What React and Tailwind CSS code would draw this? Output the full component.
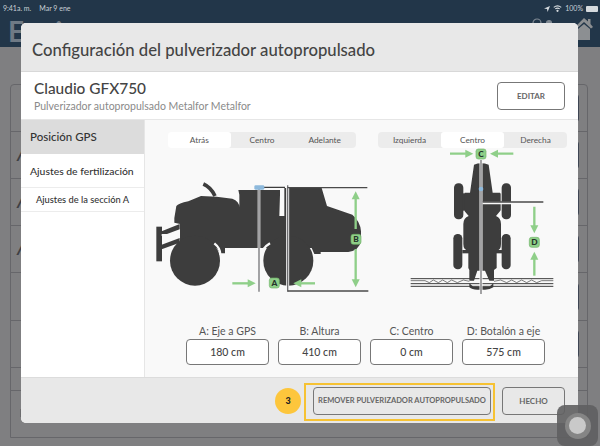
const lato = { fontFamily: 'Lato, "Open Sans", sans-serif' };

const bgRows = [47, 47, 47, 47, 48, 47, 23];

function Segments({ items, active, className }) {
  return (
    <div className={`flex h-4 rounded-[4px] bg-[#ececec] text-[8.3px] leading-4 text-[#555] ${className}`}>
      {items.map((item, i) => (
        <div key={item} className={`flex-1 text-center rounded-[3px] ${i === active ? 'bg-white' : ''}`}>{item}</div>
      ))}
    </div>
  );
}

function Arrow({ x1, y1, x2, y2 }) {
  // green arrow with the head at x2,y2
  const dx = Math.sign(x2 - x1);
  const dy = Math.sign(y2 - y1);
  const head = dx
    ? `${x2},${y2} ${x2 - dx * 24},${y2 - 12} ${x2 - dx * 24},${y2 + 12}`
    : `${x2},${y2} ${x2 - 12},${y2 - dy * 24} ${x2 + 12},${y2 - dy * 24}`;
  return (
    <g>
      <line x1={x1} y1={y1} x2={x2 - dx * 20} y2={y2 - dy * 20} stroke="#8fcf89" strokeWidth="7" />
      <polygon points={head} fill="#8fcf89" />
    </g>
  );
}

function Tag({ x, y, label }) {
  return (
    <g>
      <rect x={x - 15} y={y - 15} width="30" height="30" rx="7" fill="#8fcf89" stroke="#6fb368" strokeWidth="2" />
      <text x={x} y={y + 9} textAnchor="middle" fontSize="25" fontWeight="900" fill="#26332a" style={lato}>{label}</text>
    </g>
  );
}

function SideView() {
  return (
    <svg width="225" height="150" viewBox="0 72 675 450" className="shrink-0">
      <g fill="#3d3d3d">
        <rect x="34" y="308" width="17" height="104" />
        <polygon points="50,322 104,300 104,316 50,336" />
        <polygon points="50,362 104,342 104,356 50,376" />
        <path d="M88 282 L94 246 Q100 238 130 232 L168 216 L215 218 L262 224 Q283 232 283 250 L283 212 L280 198 L405 198 L405 212 L403 276 L418 276 L418 192 L530 192 L546 246 L622 272 Q646 292 648 322 L648 352 Q642 380 610 384 L527 384 L527 390 L508 390 L500 372 L240 372 L240 388 L225 388 L215 372 L105 372 L105 300 L88 296 Z" />
        <circle cx="150" cy="410" r="75" />
        <circle cx="430" cy="410" r="75" />
      </g>
      <path d="M175 180 Q198 190 210 216" fill="none" stroke="#3d3d3d" strokeWidth="11" />
      <path d="M208 358 Q226 372 226 392" fill="none" stroke="#f9f9f9" strokeWidth="7" />
      <path d="M375 358 Q352 372 350 392" fill="none" stroke="#f9f9f9" strokeWidth="7" />
      <rect x="50" y="330" width="52" height="6" fill="#f9f9f9" />
      <line x1="342" y1="190" x2="342" y2="503" stroke="#f9f9f9" strokeWidth="8" />
      <line x1="342" y1="190" x2="342" y2="503" stroke="#77777a" strokeWidth="4" />
      <line x1="342" y1="190" x2="420" y2="190" stroke="#3d3d3d" strokeWidth="4" />
      <line x1="428" y1="184" x2="428" y2="503" stroke="#f9f9f9" strokeWidth="9" />
      <line x1="428" y1="184" x2="428" y2="503" stroke="#6f6f72" strokeWidth="4" />
      <line x1="428" y1="191" x2="667" y2="191" stroke="#4a4a4a" strokeWidth="4" />
      <line x1="428" y1="501" x2="670" y2="501" stroke="#4a4a4a" strokeWidth="4" />
      <rect x="328" y="184" width="30" height="13" rx="4" fill="#8db9dc" />
      <Arrow x1={262} y1={478} x2={332} y2={478} />
      <Arrow x1={510} y1={478} x2={445} y2={478} />
      <Arrow x1={632} y1={315} x2={632} y2={202} />
      <Arrow x1={632} y1={375} x2={632} y2={490} />
      <Tag x={388} y={477} label="A" />
      <Tag x={633} y={346} label="B" />
    </svg>
  );
}

function TopView() {
  return (
    <svg width="210" height="150" viewBox="0 72 630 450" className="shrink-0">
      <g fill="#3d3d3d">
        <rect x="252" y="178" width="28" height="108" rx="13" />
        <rect x="395" y="178" width="28" height="108" rx="13" />
        <rect x="250" y="330" width="27" height="106" rx="13" />
        <rect x="395" y="330" width="27" height="106" rx="13" />
        <rect x="278" y="208" width="20" height="52" />
        <rect x="372" y="208" width="20" height="52" />
        <rect x="277" y="378" width="20" height="10" />
        <rect x="378" y="378" width="20" height="10" />
        <path d="M312 122 Q333 114 356 122 L368 206 L390 206 L390 262 L378 276 Q393 282 393 300 L393 360 Q393 378 380 380 L380 432 L372 438 L372 470 L358 470 L345 440 L322 440 L312 470 L298 470 L298 438 L295 432 L295 380 Q280 378 280 360 L280 300 Q280 282 296 276 L284 262 L284 206 L300 206 Z" />
        <path d="M310 488 L358 488 L370 478 L370 490 Q360 497 345 497 L322 497 Q306 497 298 490 L298 478 Z" />
      </g>
      <g stroke="#3d3d3d" fill="none">
        <line x1="122" y1="464" x2="550" y2="464" strokeWidth="3" />
        <line x1="122" y1="479" x2="550" y2="479" strokeWidth="3" />
        <line x1="122" y1="487" x2="550" y2="487" strokeWidth="3" />
        <path d="M122 470 L165 470 L178 476 L190 468 L205 476 L218 468 L232 476 L245 468 L262 476 L280 468 L298 472 M372 472 L392 468 L410 476 L425 468 L440 476 L455 468 L470 476 L485 468 L500 476 L515 470 L550 470" strokeWidth="2" />
      </g>
      <line x1="333" y1="108" x2="333" y2="510" stroke="#f9f9f9" strokeWidth="9" />
      <line x1="333" y1="108" x2="333" y2="510" stroke="#77777a" strokeWidth="4" />
      <line x1="338" y1="237" x2="520" y2="237" stroke="#f9f9f9" strokeWidth="8" />
      <line x1="338" y1="234" x2="520" y2="234" stroke="#4a4a4a" strokeWidth="4" />
      <circle cx="333" cy="195" r="7" fill="#8db9dc" />
      <Arrow x1={240} y1={89} x2={310} y2={89} />
      <Arrow x1={430} y1={89} x2={360} y2={89} />
      <Arrow x1={493} y1={248} x2={493} y2={328} />
      <Arrow x1={493} y1={455} x2={493} y2={383} />
      <Tag x={333} y={90} label="C" />
      <Tag x={493} y={355} label="D" />
    </svg>
  );
}

function Measure({ label, value }) {
  return (
    <div className="w-[83px] flex flex-col items-center">
      <div className="text-[10.5px] leading-4 h-4 text-[#555] whitespace-nowrap">{label}</div>
      <div className="w-full h-[26px] bg-white border border-[#777] rounded-[4px] text-[10.5px] leading-6 text-center text-[#444] font-medium">{value}</div>
    </div>
  );
}

export default function App() {
  return (
    <div style={lato} className="relative w-[600px] h-[446px] overflow-hidden bg-[#7f7f81]">
      {/* dimmed page behind the dialog */}
      <div className="h-[47px] bg-[#223649] relative">
        <div className="flex items-center h-[17px] pl-[3px] pr-[2px] text-[7px] text-[#c9d0d6] gap-2">
          <span>9:41a. m.</span>
          <span>Mar 9 ene</span>
          <div className="ml-auto flex items-center gap-[3px]">
            <svg width="6" height="6" viewBox="0 0 10 10"><polygon points="10,0 0,4 5,5 6,10" fill="#d5dade" /></svg>
            <svg width="9" height="7" viewBox="0 0 12 9" fill="none" stroke="#d5dade" strokeWidth="1.4"><path d="M1 3 Q6 -1 11 3 M3 5 Q6 3 9 5" /><circle cx="6" cy="7.5" r="0.8" fill="#d5dade" /></svg>
            <span>100%</span>
            <div className="w-[12px] h-[6px] bg-[#d5dade] rounded-[1px]" />
          </div>
        </div>
        <div className="pl-2 text-[28px] leading-[30px] text-[#6f7a85] font-bold -mt-[1px]">Equipo</div>
        <svg width="18" height="22" viewBox="0 0 18 22" className="absolute left-[575px] top-[18px]">
          <polygon points="9,0 13,3.5 13,1 15.5,1 15.5,6 18,9 16,10.5 9,4 2,10.5 0,9" fill="#8c8f92" />
          <polygon points="3,11 9,6 15,11 15,22 3,22" fill="#8c8f92" />
        </svg>
        <svg width="24" height="8" viewBox="0 0 24 8" className="absolute left-[532px] top-[17px]" fill="none" stroke="#7f8993" strokeWidth="1.2">
          <circle cx="5" cy="6" r="4" />
          <circle cx="17" cy="6" r="2.5" fill="#7f8993" />
        </svg>
      </div>
      <div className="ml-[10px] w-[578px] mt-[37px] border border-[#66666a] rounded-t-[4px]">
        {bgRows.map((h, i) => (
          <div key={i} style={{ height: h }} className="border-b border-[#66666a] pl-[6px] pr-[8px] text-[#3f3f44] text-[17px] font-bold flex items-center">
            {i > 0 && i < 4 ? <span className="italic">ʎ</span> : null}
            {i < 6 ? <div className="ml-auto w-[30px] h-[28px] border border-[#3f4654] rounded-[3px]" /> : null}
          </div>
        ))}
        <div className="h-[46px] pl-[9px] pt-[13px] flex gap-[2px] text-[13px] leading-[16px] text-[#6c6c6e] whitespace-nowrap">
          <div className="w-[9px] h-[8px] mt-[5px] bg-[#6c6c6e]" />
          <div className="w-[9px] h-[8px] mt-[5px] mr-[17px] bg-[#6c6c6e]" />
          <span>John Deere, 16 Row Planter #1</span>
        </div>
      </div>

      {/* dialog */}
      <div className="absolute left-[21px] top-[23px] w-[557px] h-[400px] rounded-[5px] overflow-hidden bg-white flex flex-col">
        <div className="h-[49px] shrink-0 bg-[#e8e8e8] border-b border-[#d8d8d8] pl-[11px] pt-[16px] text-[16.7px] leading-[22px] font-medium text-[#444] whitespace-nowrap">
          Configuración del pulverizador autopropulsado
        </div>
        <div className="h-[48px] shrink-0 flex items-center border-b border-[#e6e6e6] pl-[13px] pr-[13px]">
          <div>
            <div className="text-[15.4px] leading-[20px] font-medium text-[#444]">Claudio GFX750</div>
            <div className="text-[10.5px] leading-[14px] text-[#8a8a8a] mt-[1px]">Pulverizador autopropulsado Metalfor Metalfor</div>
          </div>
          <div className="ml-auto w-[68px] h-[28px] border border-[#777] rounded-[4px] text-center text-[8px] leading-[26px] font-bold text-[#666]">EDITAR</div>
        </div>
        <div className="flex-1 flex min-h-0">
          <div className="w-[124px] shrink-0 border-r border-[#e6e6e6] text-[#333]">
            <div className="h-[34px] bg-[#dcdcdc] pl-[9px] text-[11.5px] leading-[34px] font-medium">Posición GPS</div>
            <div className="h-[34px] border-b border-[#ececec] pl-[9px] text-[10.4px] leading-[34px] font-medium">Ajustes de fertilización</div>
            <div className="h-[24px] border-b border-[#ececec] pl-[15px] text-[9.3px] leading-[24px] font-medium">Ajustes de la sección A</div>
          </div>
          <div className="flex-1 bg-[#f9f9f9] min-w-0">
            <div className="flex pt-3">
              <div className="w-[225px] shrink-0">
                <Segments items={['Atrás', 'Centro', 'Adelante']} active={0} className="ml-[23px] w-[188px]" />
                <SideView />
              </div>
              <div className="w-[208px] shrink-0">
                <Segments items={['Izquierda', 'Centro', 'Derecha']} active={1} className="ml-[8px] w-[189px]" />
                <TopView />
              </div>
            </div>
            <div className="flex gap-[9px] pl-[41px] mt-[25px]">
              <Measure label="A: Eje a GPS" value="180 cm" />
              <Measure label="B: Altura" value="410 cm" />
              <Measure label="C: Centro" value="0 cm" />
              <Measure label="D: Botalón a eje" value="575 cm" />
            </div>
          </div>
        </div>
        <div className="h-[46px] shrink-0 bg-[#e8e8e8] border-t border-[#dcdcdc] flex items-start pt-[5px] pr-[13px]">
          <div className="ml-auto mt-[5px] w-[26px] h-[26px] rounded-full bg-[#fdc63c] text-center text-[9px] leading-[26px] font-black text-[#222]">3</div>
          <div className="ml-[3px] w-[191px] h-[38px] border-2 border-[#f6c233] pl-[7px] pt-[2px]">
            <div className="w-[178px] h-[28px] border border-[#777] rounded-[4px] text-center text-[7.5px] leading-[26px] font-bold text-[#666] whitespace-nowrap">REMOVER PULVERIZADOR AUTOPROPULSADO</div>
          </div>
          <div className="ml-[7px] mt-[4px] w-[63px] h-[28px] border border-[#777] rounded-[4px] text-center text-[8px] leading-[26px] font-bold text-[#666]">HECHO</div>
        </div>
      </div>

      {/* assistive touch */}
      <div className="absolute left-[557px] top-[405px] w-[41px] h-[41px] rounded-[8px] bg-[#5f5f61]/90 flex items-center justify-center">
        <div className="w-[26px] h-[26px] rounded-full bg-[#858585] flex items-center justify-center">
          <div className="w-[17px] h-[17px] rounded-full bg-[#c9c9c9]" />
        </div>
      </div>
    </div>
  );
}
